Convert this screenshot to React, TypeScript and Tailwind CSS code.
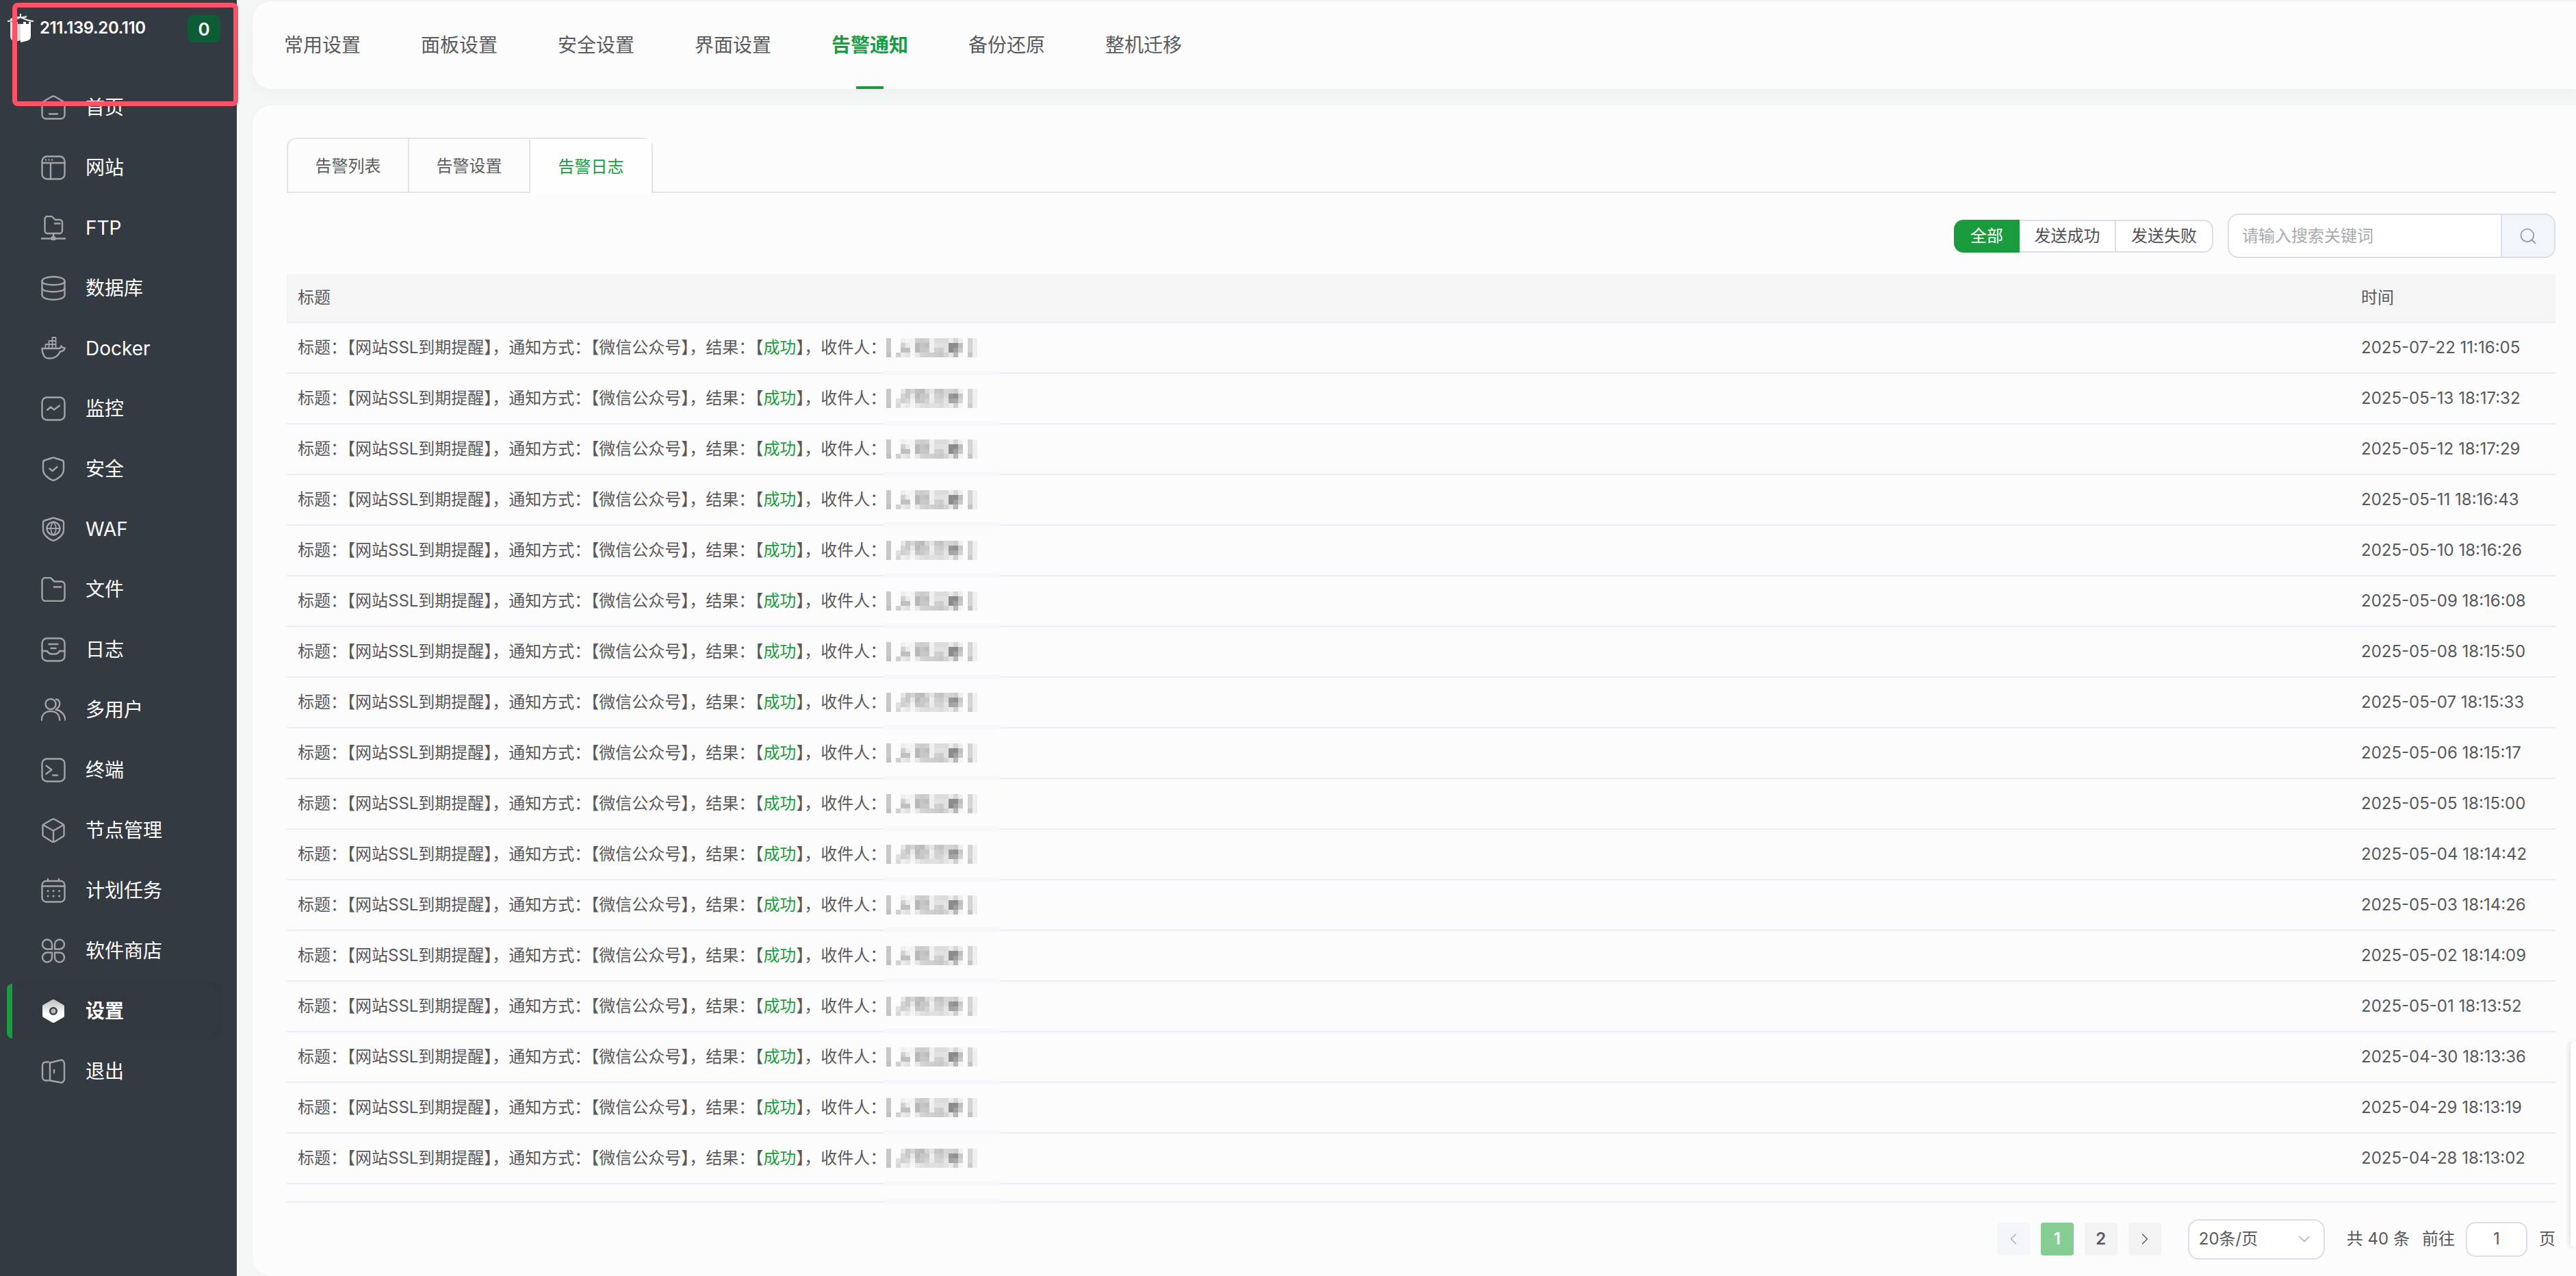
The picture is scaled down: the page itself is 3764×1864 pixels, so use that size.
import { ChevronDown, ChevronLeft, ChevronRight, Search } from "lucide-react";
import type { ReactNode } from "react";

const Icon = ({ children }: { children: ReactNode }) => (
  <svg
    viewBox="0 0 36 36"
    fill="none"
    stroke="#a3a4a6"
    strokeWidth="2.4"
    strokeLinecap="round"
    strokeLinejoin="round"
    className="h-9 w-9 shrink-0"
  >
    {children}
  </svg>
);

const icons: Record<string, ReactNode> = {
  home: (
    <>
      <path d="M1.500 10.500 16 2a4 4 0 0 1 4 0l14.500 8.500V29a6 6 0 0 1-6 5.500h-21a6 6 0 0 1-6-5.500Z" />
      <path d="M12 27.500h12" />
    </>
  ),
  site: (
    <>
      <rect x="1.500" y="1.500" width="33" height="33" rx="7" />
      <path d="M1.500 11h33M14 11v23.500" />
      <path d="M7 6.500h.1M11.500 6.500h.1M16 6.500h.1" />
    </>
  ),
  ftp: (
    <>
      <path d="M5.500 5a4 4 0 0 1 4-4h6l5 5h6.500a4 4 0 0 1 4 4v12a4 4 0 0 1-4 4h-17.500a4 4 0 0 1-4-4Z" />
      <path d="M20 11.500h7.500M18 26v7M.5 33.500h35" />
      <circle cx="18" cy="33.500" r="2.500" fill="#a3a4a6" />
    </>
  ),
  db: (
    <>
      <path d="M1.500 8c0-9 33-9 33 0v20c0 9-33 9-33 0Z" />
      <path d="M1.500 8c0 7 33 7 33 0M1.500 18c0 7 33 7 33 0" />
    </>
  ),
  docker: (
    <>
      <path d="M1.500 18h25c1.500 0 2.500-2 3-3.500 1 2 3 3 5.500 3-1.500 3.500-4.500 5-7 5-3 6-8 10-14.500 10h-3C5 32.500 1.500 26 1.500 18Z" />
      <path
        d="M6.500 12h15v6M11.500 7h10v5M16.500 2h5v5M6.500 12v6M11.500 7v11M16.500 2v16"
        strokeWidth="1.800"
      />
    </>
  ),
  monitor: (
    <>
      <rect x="1.500" y="1.500" width="33" height="33" rx="7" />
      <path d="m9 20 5-4.500 5 4 8-6" />
    </>
  ),
  shield: (
    <>
      <path d="M16 2a5 5 0 0 1 4 0l11 3.500a3 3 0 0 1 2 3V19c0 8-9 14-15 16-6-2-15-8-15-16V8.500a3 3 0 0 1 2-3Z" />
      <path d="m12.500 17.500 4 3.500 7-6" />
    </>
  ),
  waf: (
    <>
      <path d="M16 2a5 5 0 0 1 4 0l11 3.500a3 3 0 0 1 2 3V19c0 8-9 14-15 16-6-2-15-8-15-16V8.500a3 3 0 0 1 2-3Z" />
      <circle cx="18" cy="17" r="9.500" />
      <path d="M8.500 17h19M18 7.500c-5 5-5 14 0 19M18 7.500c5 5 5 14 0 19" strokeWidth="1.800" />
    </>
  ),
  folder: (
    <>
      <path d="M1.500 6a5 5 0 0 1 5-5h6c2 0 3 1 4 2.500 1 1.500 2 3 4 3h9a5 5 0 0 1 5 5V30a5 5 0 0 1-5 5H6.500a5 5 0 0 1-5-5Z" />
      <path d="M19 14.500h10" />
    </>
  ),
  log: (
    <>
      <rect x="1.500" y="1.500" width="33" height="33" rx="7" />
      <path d="M1.500 20H9c2 6 16 6 18 0h7.500M11.500 10h13M14.500 16h7" />
    </>
  ),
  users: (
    <>
      <circle cx="14" cy="9.500" r="7.500" />
      <path d="M.8 33c0-8 5-13 13.200-13s13 5 13.200 13M22 2.500c6 1 8 10-.5 15 7.500 1.500 13.500 7 14 15.500" />
    </>
  ),
  terminal: (
    <>
      <rect x="1.500" y="1.500" width="33" height="33" rx="7" />
      <path d="m7.500 11.500 8 6-8 6M17 25.500h7" />
    </>
  ),
  cube: (
    <>
      <path d="M16 2a4 4 0 0 1 4 0l12 7a2.500 2.500 0 0 1 1.500 2.500v13A2.500 2.500 0 0 1 32 27l-12 7.500a4 4 0 0 1-4 0L4 27a2.500 2.500 0 0 1-1.500-2.500v-13A2.500 2.500 0 0 1 4 9Z" />
      <path d="M3 10 18 18.500 33 10M18 18.500V35" />
    </>
  ),
  calendar: (
    <>
      <rect x="1.500" y="4" width="33" height="30.500" rx="6" />
      <path d="M1.500 11.500h33M10 1v3M26 1v3" />
      <path d="M10 18.500h.1M18 18.500h.1M26.500 18.500h.1M10 26h.1M18 26h.1M26.500 26h.1" strokeWidth="3" />
    </>
  ),
  store: (
    <>
      <path d="M16 15.500H8.500a7 7 0 1 1 7.500-7Z" />
      <path d="M20 15.500h7.500a7 7 0 1 0-7.500-7Z" />
      <path d="M16 20.500H8.500a7 7 0 1 0 7.500 7Z" />
      <path d="M20 20.500h7.500a7 7 0 1 1-7.500 7Z" />
    </>
  ),
  logout: (
    <>
      <path d="M11 4.500H7a5 5 0 0 0-5 5v17a5 5 0 0 0 5 5h4" />
      <path d="M13 5.500 27 2a5 5 0 0 1 7 4.500v23a5 5 0 0 1-7 4.500L13 31.500Z" />
      <path d="M19 16v4" />
    </>
  ),
};

const SettingsIcon = () => (
  <svg viewBox="0 0 36 36" className="h-9 w-9 shrink-0">
    <defs>
      <linearGradient id="gear" x1="0" y1="0" x2="0" y2="1">
        <stop offset="0" stopColor="#bdbdbd" />
        <stop offset="0.65" stopColor="#ffffff" />
      </linearGradient>
    </defs>
    <path
      d="M16 1.500a4 4 0 0 1 4 0l12 7a3 3 0 0 1 2 3v13a3 3 0 0 1-2 3l-12 7a4 4 0 0 1-4 0l-12-7a3 3 0 0 1-2-3v-13a3 3 0 0 1 2-3Z"
      fill="url(#gear)"
    />
    <circle cx="18" cy="18" r="4.800" fill="#b9b9b9" stroke="#3a4047" strokeWidth="2.600" />
  </svg>
);

const Logo = () => (
  <svg viewBox="0 0 40 42" className="h-[42px] w-10 shrink-0">
    <path d="M5 12h3v3h4v-3h4v3h4v24L12 41c-5-2-7-4-7-9Z" fill="#dcdcdc" />
    <path d="M20 15h4v-3h4v3h4v-3h3v20c0 5-2 7-7 8l-8 2Z" fill="#ffffff" />
    <path
      d="M20 0v5M11 4c4 2 14 2 18 0M1 11c6 0 13-3 19-6 6 3 13 6 19 6M5 8c5 0 10-1 15-3"
      fill="none"
      stroke="#e8e8e8"
      strokeWidth="2.200"
    />
  </svg>
);

const navItems = [
  { icon: "home", label: "首页" },
  { icon: "site", label: "网站" },
  { icon: "ftp", label: "FTP" },
  { icon: "db", label: "数据库" },
  { icon: "docker", label: "Docker" },
  { icon: "monitor", label: "监控" },
  { icon: "shield", label: "安全" },
  { icon: "waf", label: "WAF" },
  { icon: "folder", label: "文件" },
  { icon: "log", label: "日志" },
  { icon: "users", label: "多用户" },
  { icon: "terminal", label: "终端" },
  { icon: "cube", label: "节点管理" },
  { icon: "calendar", label: "计划任务" },
  { icon: "store", label: "软件商店" },
  { icon: "settings", label: "设置", active: true },
  { icon: "logout", label: "退出" },
];

const Sidebar = () => (
  <aside className="flex w-[346px] shrink-0 flex-col bg-[#343a42] text-white">
    <div className="flex h-[117px] items-start pl-[10px] pt-5">
      <Logo />
      <span className="ml-2 mt-[8px] text-[24px] leading-[26px] font-semibold tracking-[-0.4px]">
        211.139.20.110
      </span>
      <span className="ml-auto mr-6 mt-[2px] flex h-10 w-12 items-center justify-center rounded-[8px] bg-[#0c5c36] text-[26px] font-semibold">
        0
      </span>
    </div>
    {navItems.map((item) => (
      <div
        key={item.label}
        className={
          item.active
            ? "mb-2 ml-[10px] flex h-20 w-[312px] items-center rounded-[16px] bg-[#323840] shadow-[0_0_6px_rgba(0,0,0,0.08)]"
            : "mb-2 ml-[10px] flex h-20 w-[312px] items-center"
        }
      >
        {item.active ? (
          <div className="h-full w-2 rounded-l-[12px] bg-[#1a9c3e]" />
        ) : (
          <div className="h-full w-2" />
        )}
        <div className="ml-[42px] flex items-center gap-[29px]">
          {item.icon === "settings" ? <SettingsIcon /> : <Icon>{icons[item.icon]}</Icon>}
          <span className={item.active ? "text-[28px] font-semibold" : "text-[28px]"}>
            {item.label}
          </span>
        </div>
      </div>
    ))}
  </aside>
);

const topTabs = ["常用设置", "面板设置", "安全设置", "界面设置", "告警通知", "备份还原", "整机迁移"];

const TopBar = () => (
  <div className="flex h-32 shrink-0 gap-[88px] rounded-tl-[28px] rounded-bl-[28px] bg-[#fcfcfd] pl-[46px] shadow-[0_4px_14px_rgba(0,0,0,0.03)]">
    {topTabs.map((tab) =>
      tab === "告警通知" ? (
        <div
          key={tab}
          className="relative flex items-center text-[28px] font-semibold text-[#1a9c3e]"
        >
          {tab}
          <div className="absolute bottom-0 left-9 h-1 w-10 bg-[#1a9c3e]" />
        </div>
      ) : (
        <div key={tab} className="flex items-center text-[28px] text-[#5a5b5d]">
          {tab}
        </div>
      ),
    )}
  </div>
);

const subTabs = ["告警列表", "告警设置", "告警日志"];

const SubTabs = () => (
  <div className="flex h-[81px] shrink-0 border-b-2 border-[#e2e5ec]">
    <div className="flex h-[81px] rounded-t-[14px] border-2 border-b-0 border-[#e2e4ec]">
      {subTabs.map((tab, i) => (
        <div
          key={tab}
          className={
            i === 2
              ? "flex h-[81px] w-[177px] items-center justify-center bg-[#fefefe] text-[24px] text-[#1a9c3e]"
              : "flex h-[79px] w-[177px] items-center justify-center border-r-2 border-[#e2e4ec] text-[24px] text-[#5a5b5d]"
          }
        >
          {tab}
        </div>
      ))}
    </div>
  </div>
);

const Toolbar = () => (
  <div className="mt-[30px] flex h-[65px] shrink-0 items-center justify-end gap-[21px]">
    <div className="flex h-12 text-[24px] text-[#4f5052]">
      <div className="flex w-24 items-center justify-center rounded-l-[14px] bg-[#1a9c3e] text-white">
        全部
      </div>
      <div className="flex w-[141px] items-center justify-center border-y-2 border-r-2 border-[#dcdee8] bg-white">
        发送成功
      </div>
      <div className="flex w-[142px] items-center justify-center rounded-r-[14px] border-y-2 border-r-2 border-[#dcdee8] bg-white">
        发送失败
      </div>
    </div>
    <div className="flex h-[65px] w-[479px] overflow-hidden rounded-[16px] border-2 border-[#dcdee8] bg-white">
      <div className="flex flex-1 items-center pl-[19px] text-[24px] text-[#a8abb2]">
        请输入搜索关键词
      </div>
      <div className="flex w-[78px] items-center justify-center border-l-2 border-[#dcdee8] bg-[#f2f5f9]">
        <Search className="h-7 w-7 text-[#8d9199]" strokeWidth={1.4} />
      </div>
    </div>
  </div>
);

const mosaicA = [
  "c8,,,ee,f6,f2,d0,cc,cf,f0,dd,dc,dc,eb,d6,ee,,d4,f0",
  "c8,,,d0,ea,f5,b8,c4,bf,f0,e2,e2,e2,8c,8c,c0,,d4,ee",
  "c8,,,c0,c0,f8,b8,c8,c8,f0,d0,cc,e2,8c,a0,c8,,d4,ee",
  "c0,,d0,ea,e2,f8,e8,d4,d0,d0,cc,c8,d4,e6,b8,f4,,c4,ee",
];
const mosaicB = [
  "c8,,,e6,c8,d4,c0,bc,d6,e4,c8,c4,d8,d4,cc,ee,,d4,f0",
  "c8,,,d4,c8,e8,ba,c8,c8,ee,d0,cc,dc,98,90,c8,,d4,ee",
  "c8,,e0,d0,d8,f2,c4,c8,d2,ea,d4,d4,e4,a4,a8,d4,,d4,ee",
  "c4,,d8,f0,e8,f6,e8,e0,dc,e0,e0,dc,e4,ec,d0,f4,,cc,f0",
];

const Mosaic = ({ variant }: { variant: number }) => {
  const rows = variant === 1 ? mosaicB : mosaicA;
  return (
    <div className="flex flex-col">
      {rows.map((row, r) => (
        <div key={r} className="flex">
          {row.split(",").map((shade, c) => (
            <div
              key={c}
              className="h-[7px] w-[7px]"
              style={{ backgroundColor: shade ? `#${shade}${shade.slice(0, 2)}${shade.slice(0, 2)}` : "transparent" }}
            />
          ))}
        </div>
      ))}
    </div>
  );
};

const times = [
  "2025-07-22 11:16:05",
  "2025-05-13 18:17:32",
  "2025-05-12 18:17:29",
  "2025-05-11 18:16:43",
  "2025-05-10 18:16:26",
  "2025-05-09 18:16:08",
  "2025-05-08 18:15:50",
  "2025-05-07 18:15:33",
  "2025-05-06 18:15:17",
  "2025-05-05 18:15:00",
  "2025-05-04 18:14:42",
  "2025-05-03 18:14:26",
  "2025-05-02 18:14:09",
  "2025-05-01 18:13:52",
  "2025-04-30 18:13:36",
  "2025-04-29 18:13:19",
  "2025-04-28 18:13:02",
];

const BlurPatch = () => (
  <div className="absolute bottom-[-4px] left-[872px] h-[7px] w-[171px] bg-[#f7f8fc]" />
);

const Row = ({ time, index }: { time: string; index: number }) => (
  <div className="relative flex h-[74px] shrink-0 items-center border-b-2 border-[#e9edf6] pl-4 text-[24px] text-[#58595b]">
    <div className="flex flex-1 items-center">
      <span>
        标题：【网站SSL到期提醒】，通知方式：【微信公众号】，结果：【<span className="text-[#1a9c3e]">成功</span>】，收件人：
      </span>
      <Mosaic variant={index % 3 === 1 ? 1 : 0} />
    </div>
    <div className="w-[284px] shrink-0">{time}</div>
    <BlurPatch />
  </div>
);

const Table = () => (
  <div className="mt-[23px] flex flex-col">
    <div className="flex h-[72px] shrink-0 items-center border-b-2 border-[#e9edf6] bg-[#f5f5f6] pl-4 text-[24px] text-[#58595b]">
      <div className="flex-1">标题</div>
      <div className="w-[284px]">时间</div>
    </div>
    {times.map((t, i) => (
      <Row key={t} time={t} index={i} />
    ))}
    <div className="relative h-[27px] border-b-2 border-[#e9edf6]">
      <BlurPatch />
    </div>
  </div>
);

const Pagination = () => (
  <div className="mt-[23px] flex h-[60px] shrink-0 items-center justify-end text-[24px] text-[#58595b]">
    <div className="flex gap-4">
      <div className="flex h-12 w-12 items-center justify-center rounded-[4px] bg-[#f4f6f9] text-[#a8abb2]">
        <ChevronLeft className="h-7 w-7" strokeWidth={1.2} />
      </div>
      <div className="flex h-12 w-12 items-center justify-center rounded-[4px] bg-[#86cd94] font-semibold text-white">
        1
      </div>
      <div className="flex h-12 w-12 items-center justify-center rounded-[4px] bg-[#f3f3f4] font-semibold">
        2
      </div>
      <div className="flex h-12 w-12 items-center justify-center rounded-[4px] bg-[#f3f3f4]">
        <ChevronRight className="h-7 w-7" strokeWidth={1.2} />
      </div>
    </div>
    <div className="ml-[39px] flex h-[59px] w-[200px] items-center justify-between rounded-[16px] border-2 border-[#dcdee8] bg-white pl-[14px] pr-[14px]">
      <span>20条/页</span>
      <ChevronDown className="h-7 w-7 text-[#a8abb2]" strokeWidth={1.2} />
    </div>
    <span className="ml-8 whitespace-pre">共 40 条</span>
    <span className="ml-[18px]">前往</span>
    <div className="ml-[16px] flex h-[51px] w-[90px] items-center justify-center rounded-[14px] border-2 border-[#dcdee8] bg-white">
      1
    </div>
    <span className="ml-[17px]">页</span>
  </div>
);

export default function App() {
  return (
    <div className="relative flex h-screen w-full overflow-hidden bg-[#f4f6f6] font-['Inter','Noto_Sans_CJK_SC',sans-serif]">
      <Sidebar />
      <main className="ml-[23px] flex min-w-0 flex-1 flex-col pt-[2px]">
        <TopBar />
        <div className="mt-6 flex min-h-0 flex-1 flex-col rounded-tl-[28px] rounded-bl-[28px] bg-[#fcfcfd] pb-2 pl-[50px] pr-[30px] pt-[47px]">
          <SubTabs />
          <Toolbar />
          <Table />
          <Pagination />
        </div>
      </main>
      {/* sliver of a panel hanging off the right edge */}
      <div className="absolute right-0 top-[1522px] h-[300px] w-2 rounded-l-[6px] bg-white shadow-[-2px_0_6px_rgba(0,0,0,0.12)]" />
      {/* red annotation box drawn on the screenshot */}
      <div className="pointer-events-none absolute left-[18px] top-1 h-[151px] w-[330px] rounded-[8px] border-[7px] border-[#ff5266]" />
    </div>
  );
}
